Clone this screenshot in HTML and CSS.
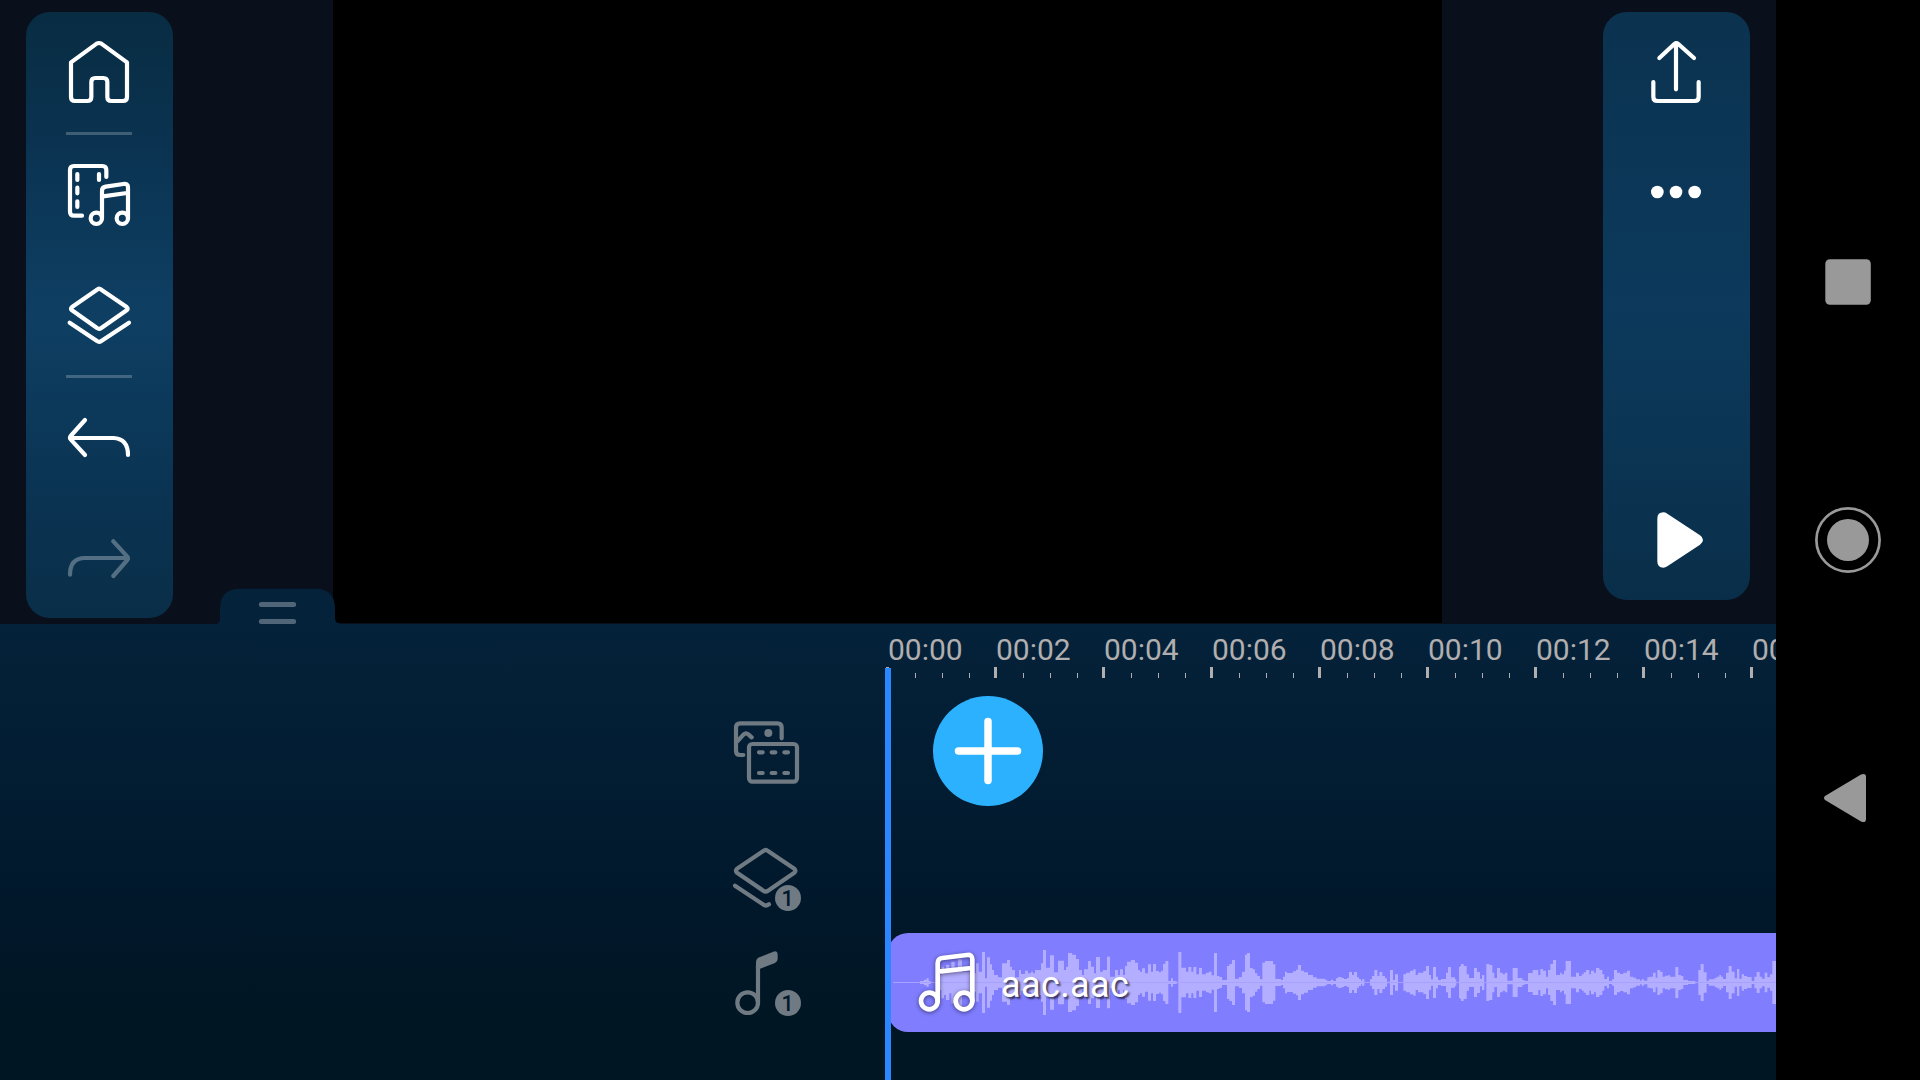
FILE: index.html
```html
<!DOCTYPE html>
<html lang="en">
<head>
<meta charset="utf-8">
<title>Video editor</title>
<link rel="stylesheet" href="styles.css">
</head>
<body>
<main class="app">
  <section class="preview">
    <nav class="panel panel-left">
      <svg class="tool" viewBox="78 36 441 360"><path d="M225 303Q213 303 213 291V187L290 131Q297 127 304 131L381 187V291Q381 303 369 303H334Q322 303 322 291V246Q322 234 310 234H286Q274 234 274 246V291Q274 303 262 303Z"/></svg>
      <hr class="divider">
      <svg class="tool" viewBox="78 405 441 360"><path d="M246 647H222Q210 647 210 635V510Q210 498 222 498H307Q319 498 319 510V531M232 522V540M232 563V580M232 604V621M297 522V540M306 655V572Q306 562 317 560L370 552Q384 550 384 562V655M309 589L381 579"/><circle cx="289" cy="655" r="17"/><circle cx="367" cy="655" r="17"/></svg>
      <svg class="tool" viewBox="78 45 441 360"><path d="M291 149Q297 143 304 149L380 201Q386 206 380 211L304 264Q297 269 291 264L216 211Q210 206 216 201ZM209 248L291 303Q297 308 304 303L387 248"/></svg>
      <hr class="divider">
      <svg class="tool" viewBox="78 -66 441 360"><path d="M255 60L212 108Q208 114 212 118L255 165M212 114H340Q384 116 384 165"/></svg>
      <svg class="tool disabled" viewBox="78 294 441 360"><path d="M210 524Q210 474 255 474H382M340 424L382 470Q386 475 382 480L340 528"/></svg>
    </nav>
    <div class="video"></div>
    <nav class="panel panel-right">
      <svg class="tool" viewBox="69 36 441 360"><path d="M220 246V290Q220 303 233 303H343Q356 303 356 290V246M288 268V132M238 174L283 132Q289 127 295 132L342 174"/></svg>
      <svg class="tool solid" viewBox="69 396 441 360"><circle cx="232" cy="576" r="19"/><circle cx="288" cy="576" r="19"/><circle cx="344" cy="576" r="19"/></svg>
      <svg class="tool solid play" viewBox="69 30 441 360"><path d="M232 146Q232 127 250 127Q256 127 262 131L360 196Q369 202 369 210Q369 218 360 224L262 289Q256 293 250 293Q232 293 232 274Z"/></svg>
    </nav>
    <svg class="handle" viewBox="645 564 375 108"><path class="handle-tab" d="M645 672Q660 672 660 657V626Q660 566 720 566H945Q1005 566 1005 626V655Q1005 670 1020 670V672Z"/><path class="handle-grip" d="M784 613.500H881M784 664.500H881"/></svg>
  </section>

  <section class="timeline">
    <div class="ruler">
      <div class="mark"><span>00:00</span><div class="ticks"><i></i><i></i><i></i><i></i></div></div>
      <div class="mark"><span>00:02</span><div class="ticks"><i></i><i></i><i></i><i></i></div></div>
      <div class="mark"><span>00:04</span><div class="ticks"><i></i><i></i><i></i><i></i></div></div>
      <div class="mark"><span>00:06</span><div class="ticks"><i></i><i></i><i></i><i></i></div></div>
      <div class="mark"><span>00:08</span><div class="ticks"><i></i><i></i><i></i><i></i></div></div>
      <div class="mark"><span>00:10</span><div class="ticks"><i></i><i></i><i></i><i></i></div></div>
      <div class="mark"><span>00:12</span><div class="ticks"><i></i><i></i><i></i><i></i></div></div>
      <div class="mark"><span>00:14</span><div class="ticks"><i></i><i></i><i></i><i></i></div></div>
      <div class="mark"><span>00:16</span><div class="ticks"><i></i><i></i><i></i><i></i></div></div>
    </div>

    <div class="track track-video">
      <svg class="track-icon" viewBox="-30 -60 360 426"><path d="M130 165H121Q108 165 108 152V83Q108 70 121 70H232Q245 70 245 83V115M112 124L131 103Q138 97 145 103L155 112M177 157H188M215 157H226M253 157H264M177 219H188M215 219H226M253 219H264"/><rect x="147" y="132" width="144" height="113" rx="10"/><circle class="dot" cx="205" cy="99" r="12"/></svg>
      <div class="lane"><div class="add"><svg viewBox="0 0 110 110"><path d="M25.500 55H84.500M55 25.500V84.500"/></svg></div></div>
    </div>

    <div class="track track-layer">
      <svg class="track-icon" viewBox="-30 366 360 333"><path d="M190 453Q197 447 204 453L283 506Q289 512 283 518L204 572Q197 577 190 572L111 518Q105 512 111 506ZM105 557L189 613Q197 620 207 613"/><circle class="dot" cx="264" cy="594" r="39"/><text x="263" y="617">1</text></svg>
      <div class="lane"></div>
    </div>

    <div class="track track-audio">
      <svg class="track-icon" viewBox="-30 699 360 297"><circle cx="143" cy="908" r="31"/><path d="M174 908V795"/><path class="dot" d="M168 800V788Q168 776 178 772L220 755Q233 751 233 765V777Q233 785 225 789L180 806Z"/><circle class="dot" cx="264" cy="909" r="39"/><text x="263" y="932">1</text></svg>
      <div class="lane">
        <div class="clip">
          <svg class="wave" viewBox="-3 39 2664 297">
            <defs><g id="half">
              <path transform="translate(-57)" d="M69 187.500V186H150V183H162V179H170V175H176V183H182V186H200V165H214V140H222V150H228V135H238V155H244V125H254V150H264V118H276V155H306V160H318V130H326V155H336V96H345V175H351V112H360V133H366V150H372V165H384V172H396V130H411V120H420V140H426V150H435V172H447V150H453V162H465V152H474V160H483V155H489V160H495V150H513V130H519V90H528V143H540V106H552V157H564V122H582V150H588V140H594V99H606V104H618V117H627V150H636V165H642V148H654V123H663V140H672V160H678V111H690V155H699V150H711V110H720V170H735V150H744V165H750V148H759V165H765V138H771V125H783V120H795V128H804V150H810V155H816V145H825V160H834V133H840V187.500Z"/>
              <path transform="translate(783)" d="M0 187.500V133H3V155H9V132H18V153H27V157H33V152H39V132H46V123H55V183H63V175H69V183H80V186H85V96H94V143H108V155H115V141H124V155H130V141H139V163H147V144H156V163H168V158H176V155H185V166H192V99H201V168H208V171H216V180H231V138H238V132H246V120H255V176H267V171H276V155H285V104H291V99H300V144H308V148H315V160H322V168H330V178H337V128H345V123H369V133H376V177H393V180H399V170H405V155H411V159H429V154H438V149H444V135H453V152H462V157H474V165H489V172H500V176H525V179H531V183H543V179H549V183H558V175H564V171H575V174H582V177H591V174H597V156H606V165H612V156H621V172H627V177H633V183H636V178H643V186H660V178H666V168H673V150H682V168H688V156H697V168H705V175H711V185H720V150H729V180H735V163H744V186H760V163H768V158H780V152H790V148H797V165H804V158H820V153H828V138H837V165H843V178H849V141H858V170H864V180H873V177H888V158H894V141H903V172H915V178H919V186H927V141H930V187.500Z"/>
              <path transform="translate(1713)" d="M0 187.500V138H3V132H11V138H20V163H27V174H42V144H51V156H60V176H66V165H73V186H79V132H88V135H97V158H103V174H111V144H120V158H128V163H135V158H142V182H158V144H173V174H187V180H194V183H204V159H218V150H235V165H241V147H249V152H258V170H264V150H271V132H279V120H288V165H300V158H305V163H312V152H317V123H333V170H348V158H357V168H365V163H371V157H378V150H388V163H393V152H402V158H408V144H418V150H427V163H433V177H441V170H447V183H456V178H462V150H471V158H480V162H490V158H501V152H510V170H520V173H528V178H540V182H545V178H552V182H562V172H570V170H579V158H587V173H592V150H600V155H608V170H615V167H625V165H630V170H646V141H655V165H663V168H670V180H684V183H706V186H715V150H722V132H731V157H740V183H746V178H764V174H770V170H778V165H783V170H789V177H798V158H806V138H815V155H824V175H831V147H838V176H845V163H852V168H861V171H875V183H883V170H890V156H899V170H906V176H914V158H922V172H930V163H937V123H948V187.500Z"/>
            </g></defs>
            <use href="#half"/>
            <use href="#half" transform="translate(0 375) scale(1 -1)"/>
          </svg>
          <svg class="clip-icon" viewBox="129 39 204 297"><circle cx="178" cy="243" r="25"/><circle cx="282" cy="243" r="25"/><path d="M203 243V130Q203 116 217 114L291 105Q307 103 307 118V243M205 155L305 144"/></svg>
          <span class="clip-name">aac.aac</span>
        </div>
      </div>
    </div>
    <div class="playhead"></div>
  </section>
</main>

<aside class="system-nav">
  <svg viewBox="1776 153 144 258"><rect x="1825.300" y="259.300" width="45.500" height="45.500" rx="4.500"/></svg>
  <svg viewBox="1776 411 144 258"><circle cx="1848" cy="540" r="21"/><circle class="ring" cx="1848" cy="540" r="31.600"/></svg>
  <svg viewBox="1776 669 144 258"><path d="M1825 796L1861 774.500Q1866 772.500 1866 777V819Q1866 823.500 1861 821.500L1825 800Q1823 798 1825 796Z"/></svg>
</aside>
</body>
</html>
```

FILE: styles.css
```css
* {
  box-sizing: border-box;
}

body {
  margin: 0;
  width: 1920px;
  height: 1080px;
  display: flex;
  overflow: hidden;
  background: #000;
  font-family: Roboto, "Liberation Sans", sans-serif;
}

svg {
  display: block;
}

.app {
  width: 1776px;
  display: flex;
  flex-direction: column;
  overflow: hidden;
}

/* Preview area */
.preview {
  position: relative;
  height: 624px;
  display: flex;
  justify-content: space-between;
  align-items: flex-start;
  padding: 0 26px;
  background: #090f1b;
}

.panel {
  width: 147px;
  margin-top: 12px;
  border-radius: 24px;
  display: flex;
  flex-direction: column;
  align-items: center;
}

.panel-left {
  height: 606px;
  background: linear-gradient(#082c42, #0b3453 25%, #0e3f63 50%, #0b3555 75%, #092e48);
}

.panel-right {
  height: 588px;
  background: linear-gradient(#0b3350, #0c395c 50%, #0b3452 78%, #092e49);
}

.video {
  width: 1109px;
  height: 623px;
  margin-left: 160px;
  margin-right: 161px;
  background: #000;
}

.tool {
  width: 147px;
  height: 120px;
  flex: none;
  fill: none;
  stroke: #fff;
  stroke-width: 12.6;
  stroke-linecap: round;
  stroke-linejoin: round;
}

.tool.solid {
  fill: #fff;
  stroke: none;
}

.tool.disabled {
  opacity: 0.3;
}

.play {
  margin-top: auto;
}

.divider {
  width: 66px;
  height: 3px;
  margin: 0 1px 0 0;
  border: 0;
  background: rgba(255, 255, 255, 0.22);
}

.handle {
  position: absolute;
  left: 215px;
  bottom: 0;
  width: 125px;
  height: 36px;
}

.handle-tab {
  fill: #042239;
}

.handle-grip {
  stroke: #506577;
  stroke-width: 15;
  stroke-linecap: round;
}

/* Timeline */
.timeline {
  position: relative;
  flex: 1;
  background: linear-gradient(#04223a, #01182b 62%, #001622 90%);
}

.ruler {
  height: 54px;
  padding-left: 886px;
  display: flex;
}

.mark {
  width: 108px;
  flex: none;
  display: flex;
  flex-direction: column;
  justify-content: space-between;
  color: #b0aeae;
  font-size: 30px;
  line-height: 34px;
}

.mark span {
  margin: 9px 0 0 2px;
}

.ticks {
  display: grid;
  grid-template-columns: repeat(4, 27px);
  height: 11px;
  align-items: end;
}

.ticks i {
  width: 1px;
  height: 5px;
  margin-left: 2px;
  background: #b0aeae;
}

.ticks i:first-child {
  width: 3px;
  height: 11px;
  margin-left: 0;
}

.track {
  display: flex;
  padding-left: 690px;
}

.track-video {
  margin-top: 2px;
  height: 142px;
}

.track-layer {
  height: 111px;
}

.track-audio {
  height: 99px;
}

.track-icon {
  width: 120px;
  height: 100%;
  flex: none;
  fill: none;
  stroke: #6f7a83;
  stroke-width: 12.6;
  stroke-linecap: round;
  stroke-linejoin: round;
}

.track-icon .dot {
  fill: #6f7a83;
  stroke: none;
}

.track-icon text {
  fill: #01182a;
  stroke: none;
  font-size: 64px;
  font-weight: 500;
  text-anchor: middle;
}

.lane {
  flex: 1;
  padding-left: 78px;
  display: flex;
  align-items: center;
}

.add {
  width: 110px;
  height: 110px;
  margin-left: 45px;
  border-radius: 50%;
  background: #2cb1ff;
}

.add path {
  stroke: #fff;
  stroke-width: 7.500;
  stroke-linecap: round;
}

.clip {
  position: relative;
  width: 888px;
  height: 99px;
  display: flex;
  align-items: center;
  padding-left: 25px;
  border-radius: 20px 0 0 20px;
  background: #807dff;
}

.wave {
  position: absolute;
  left: 0;
  top: 0;
  width: 888px;
  height: 99px;
  fill: #b3aeff;
}

.clip-icon {
  position: relative;
  width: 68px;
  height: 99px;
  fill: none;
  stroke: #fff;
  stroke-width: 14;
  stroke-linecap: round;
  filter: drop-shadow(0 1px 2px rgba(0, 0, 0, 0.5));
}

.clip-name {
  position: relative;
  margin: 4px 0 0 20px;
  color: #fff;
  font-size: 36px;
  line-height: 44px;
  letter-spacing: 0.4px;
  text-shadow: 2px 2px 2px rgba(0, 0, 0, 0.65);
}

.playhead {
  position: absolute;
  left: 885px;
  top: 44px;
  bottom: 0;
  width: 6px;
  background: #2a87ff;
}

/* Device navigation */
.system-nav {
  width: 144px;
  display: flex;
  flex-direction: column;
  justify-content: center;
}

.system-nav svg {
  width: 144px;
  height: 258px;
  fill: #999;
}

.system-nav .ring {
  fill: none;
  stroke: #999;
  stroke-width: 2.700;
}
```
